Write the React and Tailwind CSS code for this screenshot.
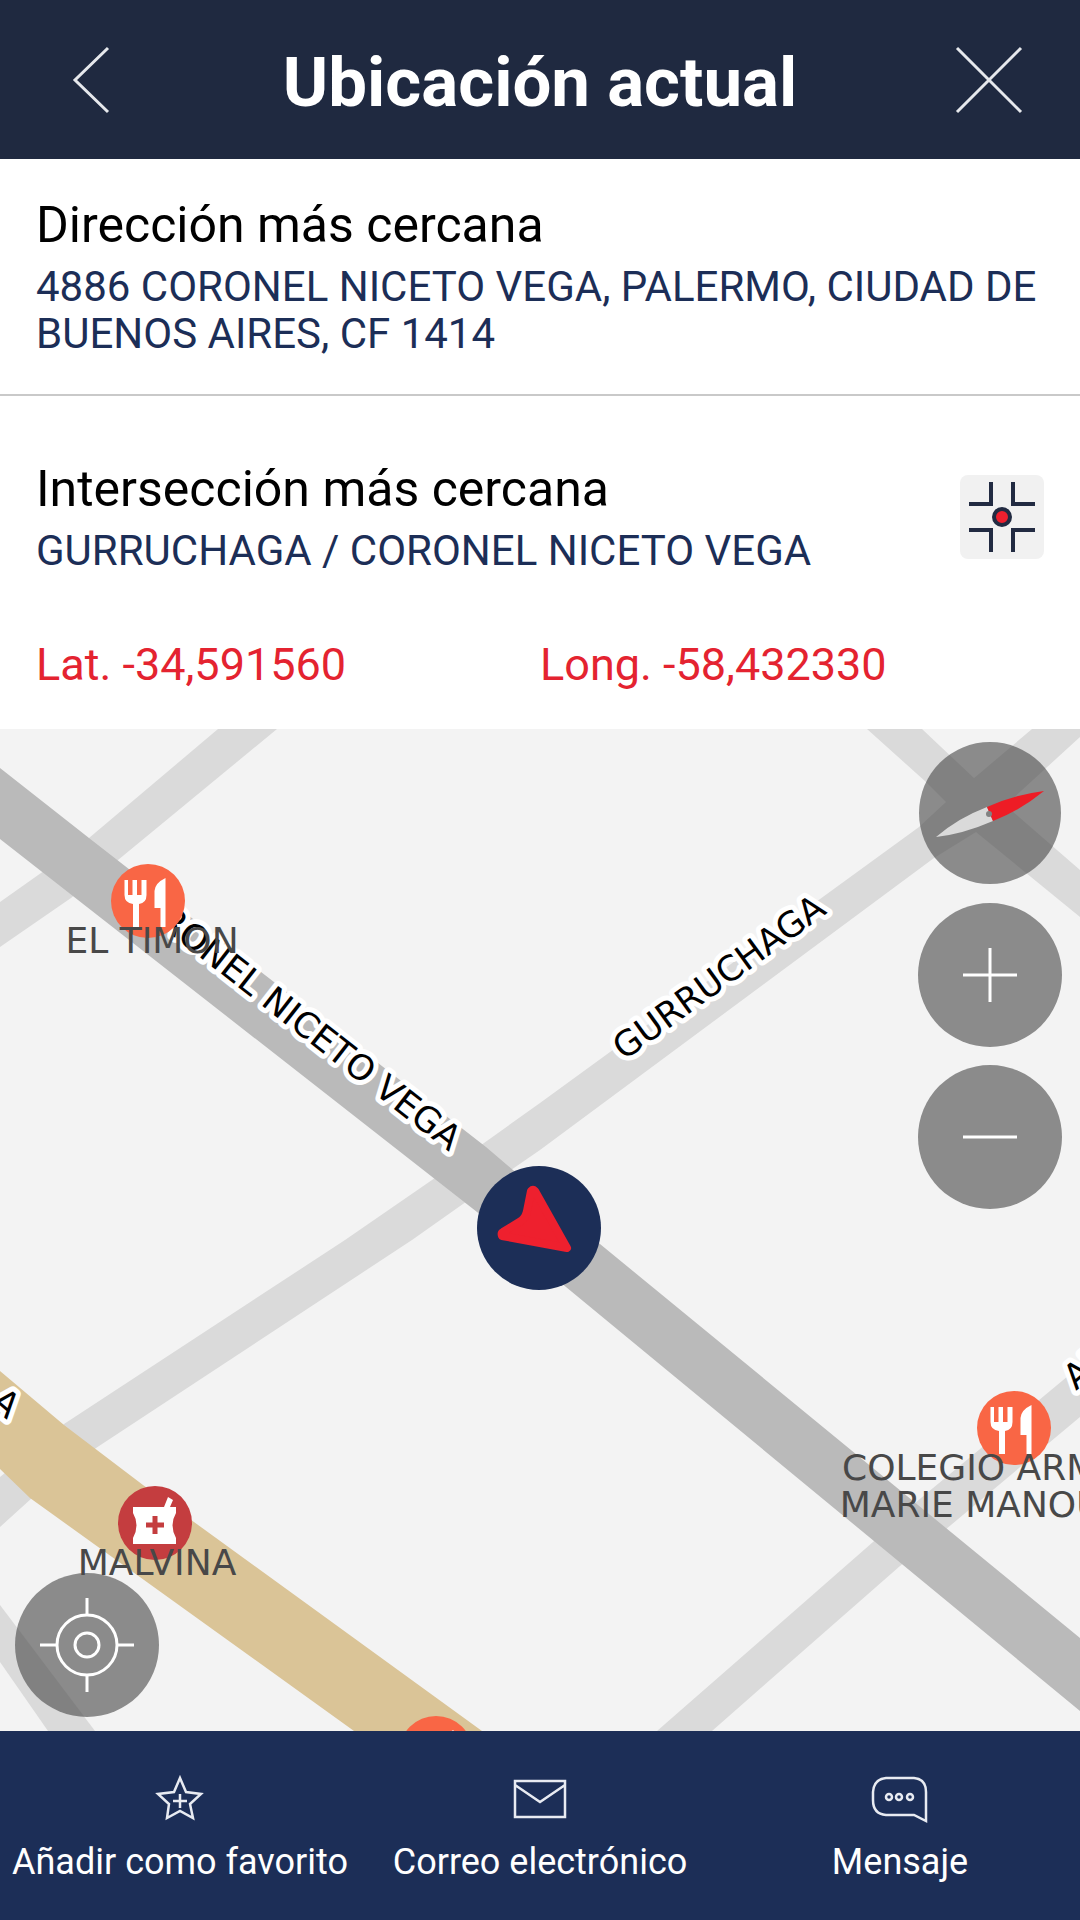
import React from 'react';

const LIGHT_ROADS = [
  // crossing street, upper left
  '218,729 277,729 118,860 71,898 0,947 0,902 41,873 89,838',
  // Gurruchaga
  '1032,729 1080,729 1080,737 976,832 934,858 540,1150 511,1170 412,1240 96,1448 32,1498 0,1527 0,1477 64,1424 345,1240 432,1180 540,1103 919,827 946,802',
  // crossing street, upper right
  '867,729 922,729 976,780 1080,870 1080,917 976,832 926,782',
  // Armenia
  '657,1731 712,1731 900,1566 945,1530 1080,1417 1080,1366 915,1503 873,1542',
  // corner, lower left
  '0,1605 95,1731 48,1731 0,1662',
];

const RestaurantPin = ({ x, y }) => (
  <g transform={`translate(${x} ${y})`}>
    <circle r="37" fill="#f96645" />
    <g fill="#fff">
      <path d="M-23.500 -21H-20V-6H-15.500V-21H-11V-6H-6.500V-21H-1.500V-6Q-1.500 2 -9 3V26H-15V3Q-23.500 2 -23.500 -6Z" />
      <path d="M17.500 -23V26H12.500V7H6.500V-10Q7 -18 17.500 -23Z" />
    </g>
  </g>
);

const PharmacyPin = ({ x, y }) => (
  <g transform={`translate(${x} ${y})`}>
    <circle r="37" fill="#c43d3f" />
    <path fill="#fff" d="M-22 -16H9L13 -26L18 -23L15 -16H21V-10Q14 2 21 15V21H-22V15Q-15 2 -22 -10Z" />
    <path stroke="#c43d3f" strokeWidth="5" d="M-9 2H9M0 -7V11" />
  </g>
);

const MapCanvas = () => (
  <svg
    className="absolute inset-0 w-full h-full"
    viewBox="0 729 1080 1002"
    preserveAspectRatio="xMidYMid slice"
    role="img"
    aria-label="Mapa"
  >
    {LIGHT_ROADS.map((points) => (
      <polygon key={points} points={points} fill="#dadada" />
    ))}
    <polygon
      fill="#bababa"
      points="0,768 89,838 486,1147 600,1244 1080,1638 1080,1711 566,1287 477,1212 0,839"
    />
    <polygon fill="#dac497" points="0,1371 64,1425 143,1485 482,1731 354,1731 30,1498 0,1469" />

    {/* Street names */}
    <g
      fontFamily="'DejaVu Sans', sans-serif"
      fontSize="35"
      fill="#000"
      stroke="#fff"
      strokeWidth="10"
      strokeLinejoin="round"
      paintOrder="stroke"
    >
      <text textAnchor="end" transform="translate(449 1152) rotate(38)">CORONEL NICETO VEGA</text>
      <text transform="translate(624 1061) rotate(-36)">GURRUCHAGA</text>
      <text transform="translate(1076 1391) rotate(-40)">ARMENIA</text>
      <text textAnchor="end" transform="translate(7 1420) rotate(40)">A</text>
    </g>

    <RestaurantPin x={148} y={901} />
    <RestaurantPin x={1014} y={1428} />
    <RestaurantPin x={436} y={1753} />
    <PharmacyPin x={155} y={1523} />

    {/* Place names */}
    <g fontFamily="'DejaVu Sans', sans-serif" fontSize="36" fill="#484848" textAnchor="middle">
      <text x="152" y="953">EL TIMON</text>
      <text x="157" y="1575">MALVINA</text>
      <text x="1014" y="1480">COLEGIO ARMENIO</text>
      <text x="1014" y="1517">MARIE MANOUKIAN</text>
    </g>

    {/* Current position */}
    <circle cx="539" cy="1228" r="62" fill="#1c2e57" />
    <path
      fill="#ee202e"
      stroke="#ee202e"
      strokeWidth="8"
      strokeLinejoin="round"
      d="M531 1191Q533 1189 535 1191L567 1248L502 1236Q501 1233 503 1232L521 1221Q526 1217 527 1211Z"
    />
  </svg>
);

const RoundButton = ({ label, children }) => (
  <button type="button" aria-label={label} className="size-36 rounded-full">
    <svg viewBox="0 0 144 144" className="w-full h-full" fill="none" stroke="#fff" strokeWidth="3">
      {children}
    </svg>
  </button>
);

const Disc = ({ r = 72 }) => (
  <circle cx="72" cy="72" r={r} fill="#4b4b4b" fillOpacity="0.62" stroke="none" />
);

const FooterButton = ({ label, children }) => (
  <button type="button" className="flex flex-col items-center gap-3 pt-[41px] pb-9">
    <svg viewBox="0 0 64 56" className="w-16 h-14" fill="none" stroke="#e8ebf2" strokeWidth="2.5">
      {children}
    </svg>
    <span className="text-[36px] leading-[44px] whitespace-nowrap">{label}</span>
  </button>
);

const App = () => {
  return (
    <div className="min-h-screen flex flex-col bg-white font-['Roboto',sans-serif]">
      <header className="flex items-end justify-between px-[42px] pt-[31px] pb-8 bg-[#1f2940] text-white">
        <button type="button" aria-label="Volver" className="size-24">
          <svg viewBox="0 0 96 96" fill="none" stroke="#e6e8ec" strokeWidth="3">
            <path d="M66 17L33 49L66 81" />
          </svg>
        </button>
        <h1 className="text-[69px] leading-[88px] font-bold">Ubicación actual</h1>
        <button type="button" aria-label="Cerrar" className="size-24">
          <svg viewBox="0 0 96 96" fill="none" stroke="#e6e8ec" strokeWidth="3">
            <path d="M15 17L79 81M79 17L15 81" />
          </svg>
        </button>
      </header>

      <section className="flex flex-col gap-2 px-9 pt-9 pb-[37px] border-b-2 border-[#c9c9c9]">
        <h2 className="text-[50px] leading-[60px] text-black">Dirección más cercana</h2>
        <p className="text-[42px] leading-[47px] text-[#1c2e57]">
          4886 CORONEL NICETO VEGA, PALERMO, CIUDAD DE BUENOS AIRES, CF 1414
        </p>
      </section>

      <section className="flex flex-col gap-[65px] px-9 pt-[63px] pb-[38px]">
        <div className="flex items-center justify-between">
          <div className="flex flex-col gap-2">
            <h2 className="text-[50px] leading-[60px] text-black">Intersección más cercana</h2>
            <p className="text-[42px] leading-[47px] text-[#1c2e57]">GURRUCHAGA / CORONEL NICETO VEGA</p>
          </div>
          <button type="button" aria-label="Ver intersección" className="size-[84px] rounded-lg bg-[#f1f1f1]">
            <svg viewBox="0 0 84 84" fill="none" stroke="#222b42" strokeWidth="4">
              <path d="M31 7V29H9M53 7V29H75M31 77V55H9M53 77V55H75" />
              <circle cx="42" cy="42" r="8" fill="#ee202e" />
            </svg>
          </button>
        </div>
        <div className="grid grid-cols-2 text-[45px] leading-[52px] text-[#e42330]">
          <p>Lat. -34,591560</p>
          <p>Long. -58,432330</p>
        </div>
      </section>

      <main className="relative flex-1 min-h-[640px] overflow-hidden bg-[#f3f3f3]">
        <MapCanvas />

        <div className="absolute top-3 right-[18px] flex flex-col gap-[18px]">
          <RoundButton label="Brújula">
            <Disc r={71} />
            <path fill="#dadada" stroke="none" d="M69 66L75 80Q45 93 18 96Q40 77 69 66Z" />
            <path fill="#ee1c25" stroke="none" d="M69 66Q95 54 126 50Q103 69 75 80Z" />
            <circle cx="71" cy="73" r="3" fill="#828282" stroke="none" />
          </RoundButton>
          <RoundButton label="Acercar">
            <Disc />
            <path d="M45 72H99M72 45V99" />
          </RoundButton>
          <RoundButton label="Alejar">
            <Disc />
            <path d="M45 72H99" />
          </RoundButton>
        </div>

        <div className="absolute bottom-[14px] left-[15px] flex">
          <RoundButton label="Centrar en mi ubicación">
            <Disc />
            <circle cx="72" cy="72" r="30" />
            <circle cx="72" cy="72" r="12" />
            <path d="M72 25V42M72 102V119M25 72H42M102 72H119" />
          </RoundButton>
        </div>
      </main>

      <footer className="grid grid-cols-3 bg-[#1c2e57] text-white">
        <FooterButton label="Añadir como favorito">
          <path d="M32 6L38 20L53 22L42 32L45 46L32 39L19 46L21 32L10 22L26 20Z" />
          <path d="M25 29H39M32 22V36" />
        </FooterButton>
        <FooterButton label="Correo electrónico">
          <path d="M7 9H57V45H7ZM7 13L32 30L57 13" />
        </FooterButton>
        <FooterButton label="Mensaje">
          <path d="M18 6H46Q58 7 58 20V49L46 43H18Q5 42 5 28V20Q6 7 18 6Z" />
          <circle cx="21" cy="25" r="3" />
          <circle cx="31" cy="25" r="3" />
          <circle cx="42" cy="25" r="3" />
        </FooterButton>
      </footer>
    </div>
  );
};

export default App;
